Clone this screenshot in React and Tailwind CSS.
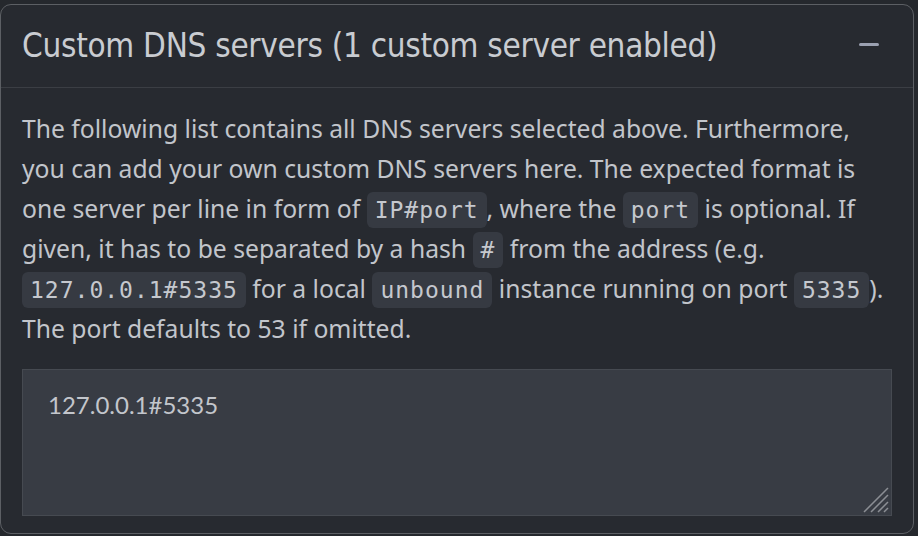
import { useState } from 'react'

const Code = ({ children }) => (
  <code className="rounded-md bg-[#363a42] px-[8px] py-[5px] font-['DejaVu_Sans_Mono',monospace] text-[23px] leading-[24px] tracking-[1px] text-[#c5c8ce]">
    {children}
  </code>
)

export default function App() {
  const [servers, setServers] = useState('127.0.0.1#5335')
  const [open, setOpen] = useState(true)

  return (
    <div className="min-h-screen bg-[#25282d] pt-[4px] font-['Noto_Sans',sans-serif]">
      <div className="w-[914px] rounded-[11px] border border-[#5c5f64] bg-[#272a30]">
        {/* Header */}
        <div className="flex h-[83px] items-center justify-between border-b border-[#3b3e44] pl-[21px] pr-[32px]">
          <h3 className="font-['DejaVu_Sans_Condensed','Lato',sans-serif] text-[33px] tracking-[-0.3px] text-[#c9ccd1]">
            Custom DNS servers (1 custom server enabled)
          </h3>
          <button onClick={() => setOpen(!open)} className="mb-[4px] flex h-6 w-6 items-center justify-center">
            <span className="block h-[3px] w-[20px] rounded-sm bg-[#9ba1b1]" />
          </button>
        </div>

        {/* Body */}
        {open && (
          <div className="px-[21px] pb-[17px] pt-[21px]">
            <p className="text-[24.7px] leading-[40px] text-[#c2c5cb]">
              The following list contains all DNS servers selected above. Furthermore,<br />
              you can add your own custom DNS servers here. The expected format is<br />
              one server per line in form of <Code>IP#port</Code>, where the <Code>port</Code> is optional. If<br />
              given, it has to be separated by a hash <Code>#</Code> from the address (e.g.<br />
              <Code>127.0.0.1#5335</Code> for a local <Code>unbound</Code> instance running on port <Code>5335</Code>).<br />
              The port defaults to 53 if omitted.
            </p>
            <div className="relative mt-[20px]">
              <textarea
                value={servers}
                onChange={e => setServers(e.target.value)}
                className="block h-[147px] w-full resize-none border border-[#464a51] bg-[#383c44] px-[25px] py-[18px] font-['Lato','Noto_Sans',sans-serif] text-[24px] leading-[34px] text-[#c3c6cc] outline-none"
              />
              <svg className="pointer-events-none absolute bottom-[3px] right-[3px]" width="26" height="26" viewBox="0 0 26 26">
                <g stroke="#8b8e94" strokeWidth="1.5">
                  <line x1="25" y1="1" x2="1" y2="25" />
                  <line x1="25" y1="8" x2="8" y2="25" />
                  <line x1="25" y1="15" x2="15" y2="25" />
                  <line x1="25" y1="21" x2="21" y2="25" />
                </g>
              </svg>
            </div>
          </div>
        )}
      </div>
    </div>
  )
}
